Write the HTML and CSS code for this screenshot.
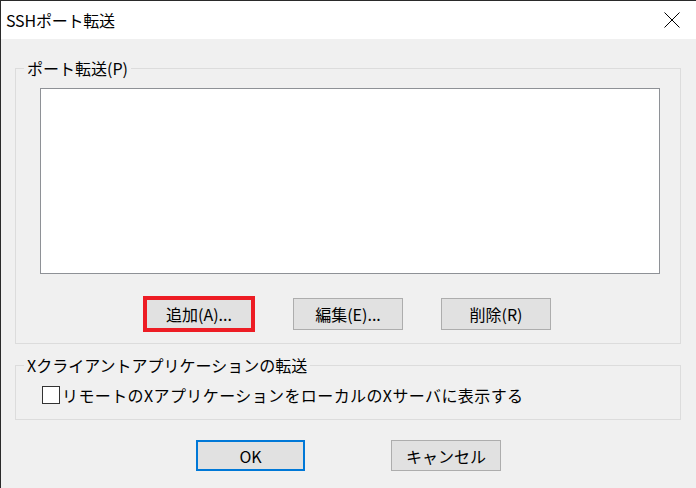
FILE: index.html
```html
<!DOCTYPE html>
<html lang="ja">
<head>
<meta charset="utf-8">
<title>SSHポート転送</title>
<link rel="stylesheet" href="styles.css">
</head>
<body>
<div class="window">
  <div class="titlebar">
    <span class="title">SSHポート転送</span>
    <svg class="close" width="16" height="16" viewBox="0 0 16 16"><path d="M0.5 0.5 L15.5 15.5 M15.5 0.5 L0.5 15.5" stroke="#000" stroke-width="1" fill="none"/></svg>
  </div>
  <div class="content">
    <fieldset class="group group-ports">
      <legend class="legend">ポート転送(P)</legend>
      <div class="group-inner ports-inner">
        <div class="listbox"></div>
        <div class="btn-row">
          <button class="btn btn-marked">追加(A)...</button>
          <button class="btn">編集(E)...</button>
          <button class="btn">削除(R)</button>
        </div>
      </div>
    </fieldset>
    <fieldset class="group group-x">
      <legend class="legend">Xクライアントアプリケーションの転送</legend>
      <div class="group-inner x-inner">
        <label class="check-row"><span class="checkbox"></span><span class="check-label">リモートのXアプリケーションをローカルのXサーバに表示する</span></label>
      </div>
    </fieldset>
    <div class="dialog-buttons">
      <button class="btn btn-bottom btn-default">OK</button>
      <button class="btn btn-bottom">キャンセル</button>
    </div>
  </div>
</div>
</body>
</html>
```
FILE: styles.css
```css
html, body {
  margin: 0;
  padding: 0;
  background: #ffffff;
}
* { box-sizing: border-box; }

.window {
  width: 696px;
  height: 488px;
  border-top: 1px solid #2a2a2a;
  border-left: 1px solid #2a2a2a;
  background: #f0f0f0;
  font-family: "Noto Sans CJK JP", "Noto Sans", sans-serif;
  font-size: 16px;
  color: #000;
  display: flex;
  flex-direction: column;
  overflow: hidden;
}

.titlebar {
  height: 38px;
  background: #ffffff;
  display: flex;
  align-items: center;
  justify-content: space-between;
  padding-left: 5px;
  padding-right: 16px;
  flex: none;
}
.title {
  font-size: 16px;
  line-height: 20px;
  letter-spacing: -0.2px;
}
.close { display: block; }

.content {
  flex: 1;
  display: flex;
  flex-direction: column;
  padding-top: 21px;
  padding-left: 14px;
}

.group {
  margin: 0;
  padding: 0;
  width: 666px;
  border: 1px solid #dcdcdc;
  min-width: 0;
}
.legend {
  margin-left: 8px;
  padding: 0 3px;
  line-height: 16px;
  font-size: 16px;
}

.ports-inner {
  padding: 12px 19px 11px 24px;
}
.listbox {
  width: 620px;
  height: 186px;
  background: #ffffff;
  border: 1px solid #8e9196;
}
.btn-row {
  display: flex;
  align-items: center;
  margin-top: 22px;
  padding-left: 103px;
  gap: 38px;
  height: 36px;
}

.btn {
  font-family: "Noto Sans CJK JP", "Noto Sans", sans-serif;
  font-size: 16px;
  line-height: 18px;
  color: #000;
  background: #e1e1e1;
  border: 1px solid #adadad;
  width: 110px;
  height: 32px;
  padding: 0;
  margin: 0;
  display: flex;
  align-items: center;
  justify-content: center;
}
.btn-marked {
  width: 112px;
  height: 36px;
  border: 4px solid #ed1c24;
}

.group-x {
  margin-top: 13px;
}
.x-inner {
  padding: 12px 10px 14px 26px;
}
.check-row {
  display: flex;
  align-items: center;
  height: 20px;
}
.checkbox {
  width: 18px;
  height: 18px;
  border: 1px solid #333333;
  background: #ffffff;
  flex: none;
  margin-right: 2px;
}
.check-label {
  line-height: 20px;
  letter-spacing: 0.4px;
}

.dialog-buttons {
  display: flex;
  margin-top: 20px;
  padding-left: 181px;
  gap: 86px;
}
.btn-bottom {
  width: 110px;
  height: 31px;
}
.btn-default {
  width: 109px;
  border: 2px solid #0078d7;
}
```
